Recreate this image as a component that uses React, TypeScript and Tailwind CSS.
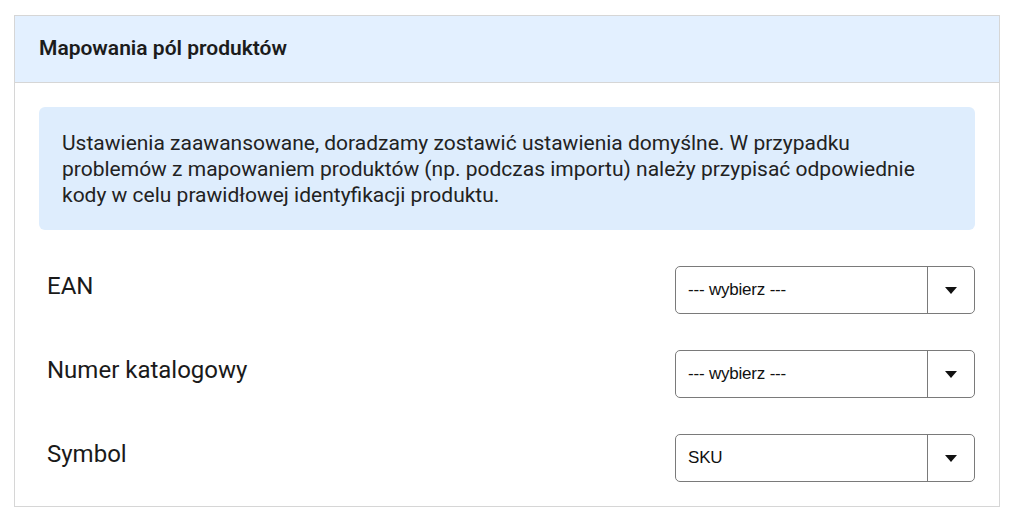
import React from "react";

function Select({ value }: { value: string }) {
  return (
    <div className="flex h-[48px] w-[300px] shrink-0 items-stretch rounded-[5px] border border-[#7a7a7a] bg-white">
      <div className="flex flex-1 items-center pl-[12px] text-[17px] tracking-[-0.2px] text-[#111] [font-family:'Liberation_Sans',Arial,sans-serif]">
        {value}
      </div>
      <div className="w-px bg-[#7a7a7a]" />
      <div className="flex w-[46px] items-center justify-center">
        <svg width="12" height="7" viewBox="0 0 12 7">
          <path d="M0 0 L12 0 L6 7 Z" fill="#111" />
        </svg>
      </div>
    </div>
  );
}

function Row({ label, value }: { label: string; value: string }) {
  return (
    <div className="flex items-start justify-between">
      <div className="pl-[8px] pt-[5px] text-[24px] leading-[30px] text-[#1a1a1a]">{label}</div>
      <Select value={value} />
    </div>
  );
}

export default function App() {
  return (
    <div className="min-h-[522px] bg-white pl-[14px] pt-[15px] [font-family:Roboto,'Noto_Sans',sans-serif]">
      <div className="w-[986px] border border-[#d6d6d6]">
        <div className="flex h-[67px] items-center border-b border-[#d6d6d6] bg-[#e3f0ff] px-[24px]">
          <h2 className="text-[21px] font-semibold text-[#1c1c1c]">Mapowania pól produktów</h2>
        </div>
        <div className="px-[24px] pb-[24px] pt-[24px]">
          <div className="rounded-[6px] bg-[#deedfd] pb-[22px] pl-[23px] pr-[23px] pt-[23px] text-[21px] leading-[26px] text-[#222]">
            Ustawienia zaawansowane, doradzamy zostawić ustawienia domyślne. W przypadku
            <br />
            problemów z mapowaniem produktów (np. podczas importu) należy przypisać odpowiednie
            <br />
            kody w celu prawidłowej identyfikacji produktu.
          </div>
          <div className="mt-[36px] flex flex-col gap-[36px]">
            <Row label="EAN" value="--- wybierz ---" />
            <Row label="Numer katalogowy" value="--- wybierz ---" />
            <Row label="Symbol" value="SKU" />
          </div>
        </div>
      </div>
    </div>
  );
}
